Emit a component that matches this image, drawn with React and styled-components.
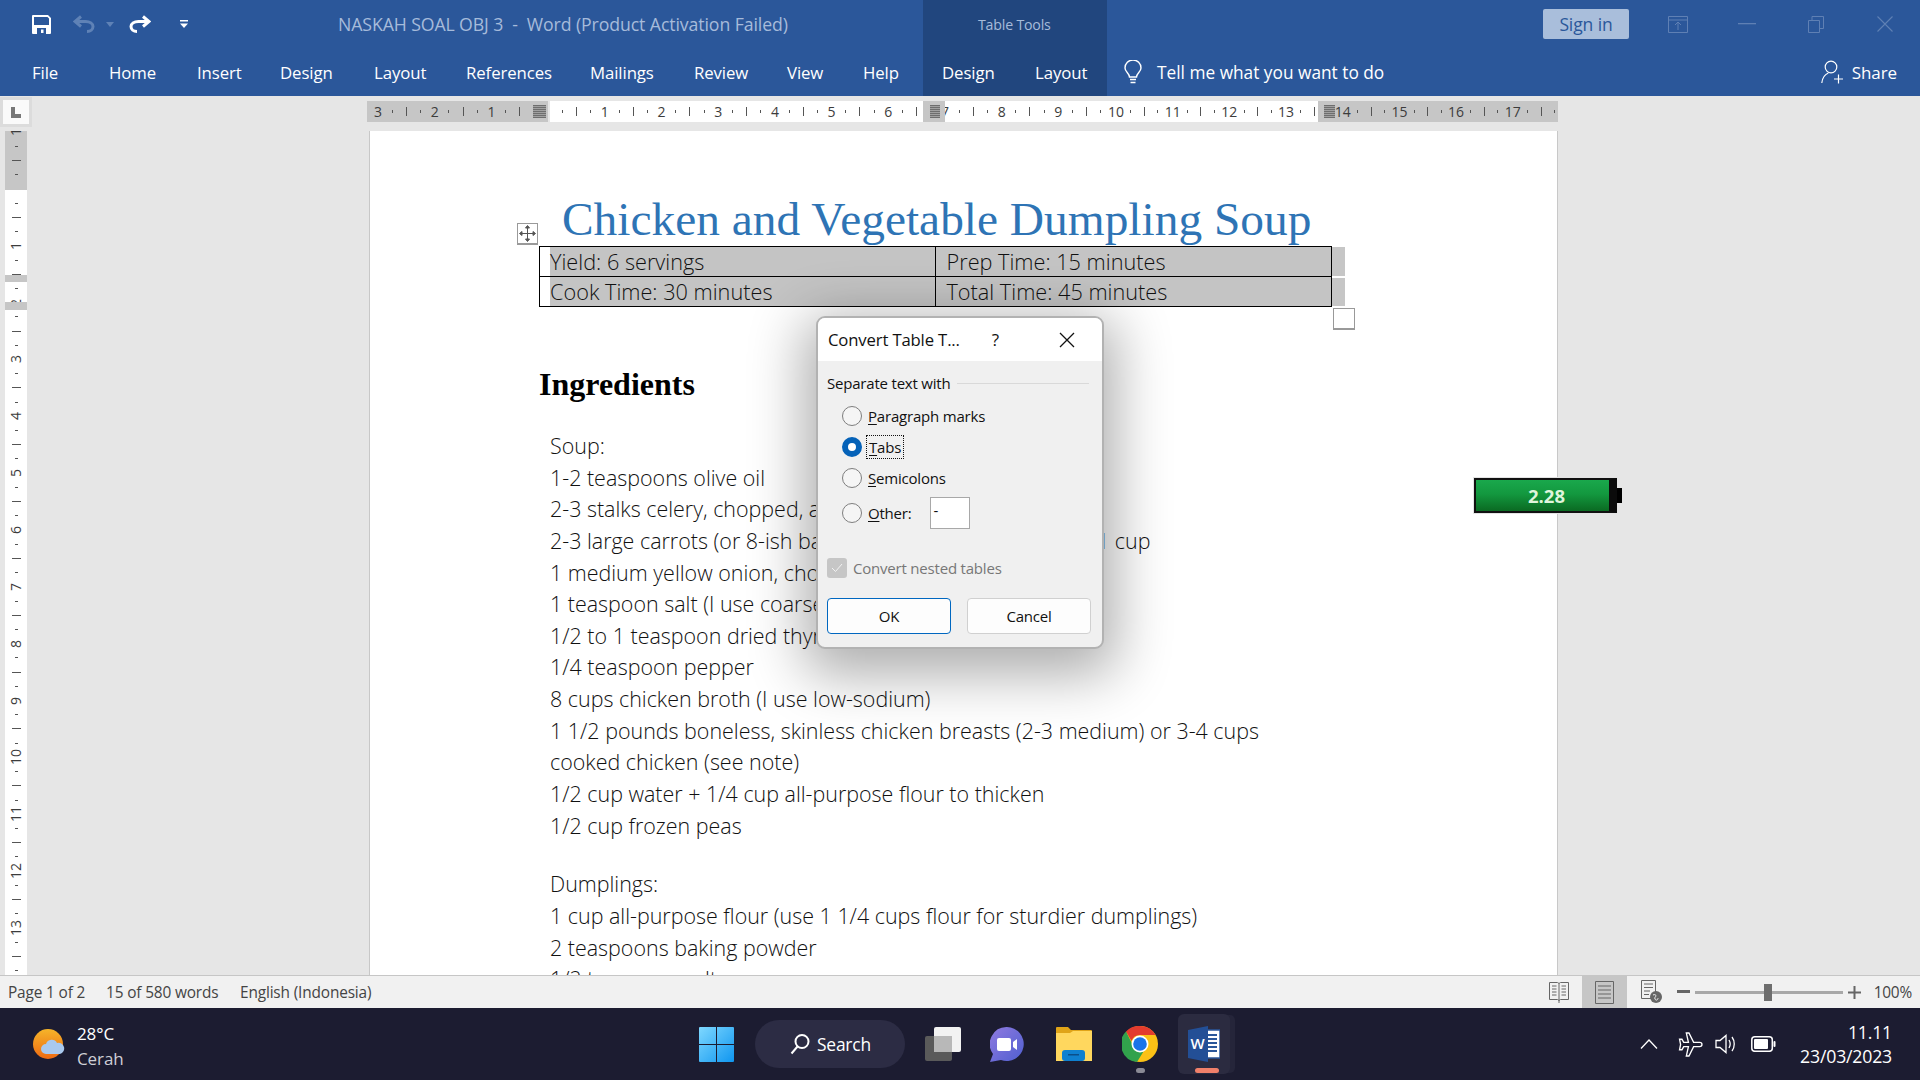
import React from "react";
import styled, { createGlobalStyle } from "styled-components";

const Global = createGlobalStyle`
  html, body { margin: 0; padding: 0; background: #e6e6e6; overflow: hidden; }
  #root { width: 1920px; height: 1080px; }
  * { box-sizing: border-box; }
`;

const UI = `"Open Sans", "Noto Sans", sans-serif`;

const Shell = styled.div`
  position: relative; width: 1920px; height: 1080px; display: flex; flex-direction: column;
  overflow: hidden; background: #e6e6e6; font-family: ${UI};
`;

/* ---------- Ribbon ---------- */
const Ribbon = styled.header`display: flex; height: 96px; background: #2b579a; flex: none;`;
const RibbonPane = styled.div`
  display: flex; flex-direction: column; flex: ${p => p.$grow ? 1 : "none"};
  width: ${p => p.$w ? p.$w + "px" : "auto"}; background: ${p => p.$dark ? "#21467e" : "transparent"};
`;
const TopRow = styled.div`display: flex; align-items: center; height: 48px;`;
const TabRow = styled.div`display: flex; align-items: center; height: 48px; padding-left: ${p => p.$pl || 0}px;`;
const QatSlot = styled.span`display: flex; margin-left: ${p => p.$ml}px; flex: none;`;
const DocTitle = styled.div`
  margin-left: ${p => p.$ml}px; font-size: 17.7px; color: #a6bbda; white-space: pre; letter-spacing: -0.1px;
`;
const ToolsLabel = styled.div`
  margin-left: 55px; font-size: 14.2px; color: #a6bbda; letter-spacing: -0.2px; white-space: nowrap;
`;
const Tab = styled.span`
  width: ${p => p.$w}px; flex: none; color: #fff; font-size: 16.8px; letter-spacing: -0.1px; white-space: nowrap;
`;
const SignIn = styled.div`
  margin-left: 436px; width: 86px; height: 30px; display: flex; align-items: center; justify-content: center;
  background: #a9bedb; color: #2b579a; font-size: 17.5px; border-radius: 2px; letter-spacing: -0.1px;
`;
const WinSlot = styled.span`
  display: flex; width: 69px; justify-content: center; flex: none; margin-left: ${p => p.$ml || 0}px;
`;
const TellMe = styled.span`
  margin-left: 15px; color: #fff; font-size: 17.3px; white-space: nowrap;
`;
const ShareWrap = styled.div`
  margin-left: auto; padding-right: 23px; display: flex; align-items: center; gap: 8px; color: #fff; font-size: 17px; letter-spacing: -0.1px;
`;
const Bulb = styled.span`display: flex; margin-left: 17px;`;

/* ---------- Rulers ---------- */
const RulerBar = styled.div`display: flex; align-items: flex-start; height: 35px; flex: none; background: #e6e6e6;`;
const CornerBox = styled.div`
  margin: 4px 0 0 3px; width: 26px; height: 24px; background: #fafafa; box-shadow: 0 0 0 3px #dcdcdc;
  display: flex; align-items: center; justify-content: center; flex: none;
`;
const RulerTrack = styled.div`
  position: relative; margin: 5px 0 0 338px; width: 1191px; height: 21px; overflow: hidden; display: flex; padding-left: 4px;
  background: linear-gradient(to right, #c6c6c6 181px, #e6e6e6 181px, #e6e6e6 183px, #fff 183px, #fff 951px, #c6c6c6 951px);
`;
const RulerCell = styled.div`
  flex: none; width: 56.7px; height: 21px; display: grid; grid-template-columns: repeat(4, 1fr); align-items: center; justify-items: center;
`;
const RulerNum = styled.span`font-size: 14px; color: #3c3c3c; line-height: 1; white-space: nowrap;`;
const TickDot = styled.i`display: block; width: 1px; height: 3px; background: #555;`;
const TickLine = styled.i`display: block; width: 1px; height: 9px; background: #555;`;
const MarginBlock = styled.div`
  position: absolute; top: 0; bottom: 0; left: 556px; width: 22px; background: #c6c6c6;
`;
const Hatch = styled.div`
  position: absolute; top: 4px; left: ${p => p.$l}px; width: ${p => p.$w}px; height: 13px;
  background: repeating-linear-gradient(0deg, #6e6e6e 0 1px, #a0a0a0 1px 2px);
`;
const Workspace = styled.div`flex: 1; min-height: 0; display: flex; overflow: hidden;`;
const VRuler = styled.div`
  position: relative; margin-left: 5px; width: 22px; flex: none; overflow: hidden;
  background: linear-gradient(to bottom, #c6c6c6 59px, #fff 59px);
`;
const VTrack = styled.div`margin-top: -6px; display: flex; flex-direction: column;`;
const VCell = styled.div`
  flex: none; height: 56.85px; display: grid; grid-template-rows: repeat(4, 1fr); align-items: center; justify-items: center;
`;
const VNum = styled.span`font-size: 14px; color: #3c3c3c; line-height: 1; transform: rotate(-90deg);`;
const VDot = styled.i`display: block; width: 3px; height: 1px; background: #555;`;
const VLine = styled.i`display: block; width: 9px; height: 1px; background: #555;`;
const VBlock = styled.div`position: absolute; left: 0; right: 0; top: ${p => p.$t}px; height: ${p => p.$h}px; background: #c6c6c6;`;

/* ---------- Document ---------- */
const Page = styled.main`
  margin-left: 342px; width: 1189px; flex: none; background: #fff; border-left: 1px solid #c8c8c8; border-right: 1px solid #c8c8c8;
  padding: 57px 0 0 169px; overflow: hidden;
`;
const DocHeading = styled.h1`
  margin: 0 0 0 23px; height: 58px; font: 400 47.4px/62px "Liberation Serif", serif; color: #2e74b5; white-space: nowrap;
`;
const TableWrap = styled.div`position: relative; width: 793px;`;
const RecipeTable = styled.div`
  display: grid; grid-template-columns: 396fr 396fr; grid-template-rows: 1fr 1fr; height: 61px; border: 1.5px solid #000;
`;
const Cell = styled.div`
  display: flex; align-items: center; font: 300 21.7px ${UI}; color: #111; white-space: nowrap;
  padding-left: ${p => p.$first ? 10 : 11}px;
  background: ${p => p.$first ? "linear-gradient(to right, #fff 10px, #c4c4c4 10px)" : "#c4c4c4"};
  border-right: ${p => p.$first ? "1.5px solid #000" : "none"};
  border-bottom: ${p => p.$top ? "1.5px solid #000" : "none"};
`;
const MoveHandle = styled.div`
  position: absolute; left: -22px; top: -23px; width: 21px; height: 22px; background: #fff; border: 1px solid #9a9a9a;
  border-bottom-width: 2px; display: flex; align-items: center; justify-content: center;
`;
const RowMark = styled.div`
  position: absolute; left: 793px; width: 13px; top: ${p => p.$t}px; height: ${p => p.$h}px; background: #c6c6c6;
`;
const ResizeHandle = styled.div`
  position: absolute; left: 794px; top: 62px; width: 22px; height: 22px; background: #fff; border: 1px solid #999; border-bottom-width: 2px;
`;
const SectionTitle = styled.h2`
  margin: 57px 0 0; font: 700 32px/40px "Liberation Serif", serif; color: #000;
`;
const Lines = styled.div`margin: 26px 0 0 11px; font: 300 21.45px/31.65px ${UI}; color: #111; white-space: nowrap;`;
const Line = styled.div`height: 31.65px;`;
const Blank = styled.div`height: 27px;`;
const Tail = styled.span`position: absolute; left: 1097px;`;

/* ---------- Status bar ---------- */
const StatusBar = styled.footer`
  height: 33px; flex: none; display: flex; align-items: stretch; background: #f1f1f1; border-top: 1px solid #c6c6c6;
  font-size: 15.4px; color: #444; letter-spacing: -0.15px;
`;
const StatusText = styled.span`align-self: center; flex: none; width: ${p => p.$w}px; margin-left: ${p => p.$ml || 0}px; white-space: nowrap;`;
const StatusRight = styled.div`margin-left: auto; display: flex; align-items: center;`;
const ViewBtn = styled.span`
  width: 45px; height: 100%; display: flex; align-items: center; justify-content: center; margin-right: ${p => p.$mr || 0}px;
  background: ${p => p.$on ? "#c6c6c6" : "transparent"};
`;
const ZoomSlider = styled.div`position: relative; width: 148px; height: 3px; background: #a8a8a8; margin: 0 5px;`;
const ZoomThumb = styled.span`position: absolute; left: 69px; top: -7px; width: 8px; height: 17px; background: #6e6e6e;`;
const ZoomPct = styled.span`margin: 0 8px 0 13px; font-size: 15.4px; letter-spacing: -0.2px;`;

/* ---------- Taskbar ---------- */
const Taskbar = styled.nav`
  height: 72px; flex: none; display: flex; align-items: center; background: #1c1c31; color: #fff; padding-left: 33px;
`;
const Weather = styled.div`width: 666px; flex: none; display: flex; align-items: center; gap: 12px;`;
const WeatherText = styled.div`font-size: 17px; line-height: 25px; letter-spacing: -0.1px; padding-top: 3px;`;
const WeatherSub = styled.div`color: #cfcfd6;`;
const Center = styled.div`display: flex; align-items: center; flex: none;`;
const TaskIcon = styled.span`
  position: relative; display: flex; flex: none; margin-left: ${p => p.$ml || 0}px;
`;
const SearchPill = styled.div`
  margin-left: 21px; width: 150px; height: 48px; border-radius: 24px; background: #2c2c44; display: flex; align-items: center; gap: 7px;
  padding-left: 35px; font-size: 17.4px; color: #fff; letter-spacing: -0.2px;
`;
const RunDot = styled.i`
  position: absolute; left: 14px; bottom: -11px; width: 9px; height: 5px; border-radius: 3px; background: #8a8a95;
`;
const WordBox = styled.div`
  position: relative; margin-left: 20px; width: 52px; height: 60px; border-radius: 6px; background: #2b2b40; display: flex;
  align-items: center; justify-content: center; box-shadow: 6px 0 0 -1px #25253a;
`;
const ActiveBar = styled.i`
  position: absolute; left: 17px; bottom: 1px; width: 24px; height: 5px; border-radius: 3px; background: #f0806a;
`;
const Tray = styled.div`
  margin-left: auto; display: flex; align-items: center; padding-right: 28px;
`;
const TrayGlyph = styled.span`display: flex; flex: none; margin-left: ${p => p.$ml || 0}px;`;
const Clock = styled.div`margin-left: 24px; text-align: right; font-size: 17.7px; line-height: 24px; letter-spacing: -0.2px;`;

/* ---------- Dialog ---------- */
const Dialog = styled.section`
  position: absolute; left: 816px; top: 316px; width: 288px; height: 333px; border-radius: 9px; border: 2px solid #b2b2b2;
  background: #f0f0f0; box-shadow: 0 14px 55px 12px rgba(0,0,0,.32); overflow: hidden; color: #111;
`;
const DialogHead = styled.div`
  height: 43px; background: #fff; display: flex; align-items: center; padding-left: 10px; font-size: 16.7px; letter-spacing: -0.15px; white-space: nowrap;
`;
const HelpMark = styled.span`margin-left: 32px; font-size: 17px; width: 14px;`;
const CloseSlot = styled.span`display: flex; margin-left: 53px;`;
const DialogBody = styled.div`padding: 12px 10px 0 9px; font-size: 15px; letter-spacing: -0.2px;`;
const Legend = styled.div`display: flex; align-items: center; gap: 6px; height: 20px; white-space: nowrap;`;
const LegendRule = styled.i`flex: 1; height: 1px; background: #d9d9d9; margin-right: 3px;`;
const RadioList = styled.div`margin: 7px 0 0 15px; display: flex; flex-direction: column;`;
const RadioRow = styled.div`display: flex; align-items: center; height: ${p => p.$h || 31}px; gap: 6px;`;
const Radio = styled.span`
  width: 20px; height: 20px; border-radius: 50%; flex: none; background: ${p => p.$on ? "#fff" : "#f5f5f5"};
  border: ${p => p.$on ? "6px solid #0562b8" : "1.5px solid #7e7e7e"};
`;
const Focus = styled.span`outline: 1px dotted #111; outline-offset: 1px; padding: 0 1px;`;
const Key = styled.span`text-decoration: underline; text-underline-offset: 2px;`;
const OtherInput = styled.div`
  margin-left: 12px; width: 40px; height: 32px; background: #fff; border: 1px solid #a8a8a8; padding: 0 0 6px 3px; display: flex; align-items: center;
`;
const CheckRow = styled.div`margin-top: 26px; display: flex; align-items: center; gap: 6px; color: #777;`;
const CheckBox = styled.span`
  width: 20px; height: 20px; border-radius: 3px; background: #c6c6c6; display: flex; align-items: center; justify-content: center;
`;
const ButtonRow = styled.div`margin-top: 20px; display: flex; gap: 16px;`;
const DlgButton = styled.div`
  width: 124px; height: 36px; border-radius: 4px; background: #fdfdfd; display: flex; align-items: center; justify-content: center;
  border: 1px solid ${p => p.$primary ? "#0067c0" : "#d0d0d0"};
`;

/* ---------- Battery gadget ---------- */
const Gadget = styled.div`position: absolute; left: 1474px; top: 478px; display: flex; align-items: center;`;
const GadgetBody = styled.div`
  width: 143px; height: 35px; border: 2px solid #111; border-right: 8px solid #0b0b0b; display: flex; align-items: center; justify-content: center;
  background: linear-gradient(to bottom, #1aa84c 0%, #13983f 45%, #0a6a22 100%); padding-left: 8px;
  color: #dff5dc; font-size: 18.5px; font-weight: 700; box-shadow: 0 0 0 1px #e4e4e4;
`;
const GadgetTip = styled.i`display: block; width: 5px; height: 15px; background: #000;`;

/* ---------- Icons ---------- */
const Save = () => (
  <svg width="19" height="19" viewBox="0 0 19 19"><path fillRule="evenodd" fill="#fff" d="M1 0h15l3 3v15a1 1 0 0 1-1 1H1a1 1 0 0 1-1-1V1a1 1 0 0 1 1-1zM2 2v8h15V3.500L15.500 2zM5 13v6h9v-6zm4 1.500h2.500V18H9z"/></svg>
);
const Arrow = ({ color, flip }) => (
  <svg width="22" height="18" viewBox="0 0 22 18" style={flip ? { transform: "scaleX(-1)" } : undefined} fill="none" stroke={color} strokeWidth="3">
    <path d="M14 1.500l6 5-6 5M20 6.500H9.500C5 6.500 2 8.500 2 11.500c0 3 2.500 5 6 5"/>
  </svg>
);
const Caret = ({ c }) => <svg width="8" height="5" viewBox="0 0 8 5"><path d="M0 0h8L4 5z" fill={c}/></svg>;
const Customize = () => <svg width="8" height="8" viewBox="0 0 8 8" fill="#fff"><rect width="8" height="1.500"/><path d="M0 3.500h8L4 8z"/></svg>;
const c = "#5f80b4";
const RibbonOpt = () => <svg width="20" height="17" viewBox="0 0 20 17" fill="none" stroke={c}><path d="M.5.500h19v16H.5zM.5 4h19M10 14V6.500M7 9l3-3 3 3"/></svg>;
const Minimize = () => <svg width="18" height="2" viewBox="0 0 18 2"><rect width="18" height="1.300" fill={c}/></svg>;
const Restore = () => <svg width="16" height="17" viewBox="0 0 16 17" fill="none" stroke={c}><path d="M.5 4.500h11v12H.5zM4 4.500V.5h11.500v12h-4"/></svg>;
const CloseWin = () => <svg width="16" height="16" viewBox="0 0 16 16" stroke={c} strokeWidth="1.100"><path d="M.5.500l15 15M15.500.500l-15 15"/></svg>;
const BulbIcon = () => (
  <svg width="18" height="24" viewBox="0 0 18 24" fill="none" stroke="#fff" strokeWidth="1.400"><path d="M5.500 17c0-3.500-4.500-5-4.500-9a8 8 0 0 1 16 0c0 4-4.500 5.500-4.500 9zM6 19.500h6M6.500 22.500h5"/></svg>
);
const ShareIcon = () => (
  <svg width="23" height="24" viewBox="0 0 23 24" fill="none" stroke="#fff" strokeWidth="1.200"><circle cx="10" cy="7" r="5.800"/><path d="M.8 23c.5-5 3-8.500 6.500-10M22 19h-9M17.500 14.500v9"/></svg>
);
const LMark = () => <svg width="10" height="11" viewBox="0 0 10 11"><path d="M0 0h4v7h6v4H0z" fill="#777"/></svg>;
const MoveIcon = () => (
  <svg width="17" height="17" viewBox="0 0 17 17" fill="none" stroke="#555"><path d="M8.500 1v15M1 8.500h15"/><path d="M6.500 3l2-2.500 2 2.500zM6.500 14l2 2.500 2-2.500zM3 6.500L.5 8.500l2.500 2zM14 6.500l2.500 2-2.500 2z" fill="#555"/></svg>
);
const g = "#666";
const ReadIcon = () => (
  <svg width="20" height="22" viewBox="0 0 20 22" fill="none" stroke={g}><path d="M.5 1.500h8l1.500 1 1.500-1h8v17h-8L10 19.500 8.500 18.500h-8zM10 2.500v20M3 5h4.500M3 8h4.500M3 11h4.500M3 14h4.500M12.500 5H17M12.500 8H17M12.500 11H17M12.500 14H17"/></svg>
);
const PrintIcon = () => (
  <svg width="19" height="23" viewBox="0 0 19 23" fill="none" stroke={g}><path d="M.5.500h18v22H.5zM3 5h13M3 9h13M3 13h13M3 17h13"/></svg>
);
const WebIcon = () => (
  <svg width="22" height="24" viewBox="0 0 22 24"><path fill="none" stroke={g} d="M.5.500h14v18H.5zM3 4h9M3 7.500h9M3 11h6M3 14.500h5"/><circle cx="15" cy="17" r="6" fill={g}/><path d="M12 15c2-1 3 0 3 1s-2 1-1 3 3 1 3-1" stroke="#f1f1f1" fill="none"/></svg>
);
const Sun = () => (
  <svg width="32" height="30" viewBox="0 0 32 30">
    <defs><linearGradient id="sun" x1="0" y1="0" x2="0" y2="1"><stop offset="0" stopColor="#f5b42a"/><stop offset="1" stopColor="#ee6a12"/></linearGradient></defs>
    <circle cx="15" cy="15" r="15" fill="url(#sun)"/>
    <path d="M13 25a5 5 0 0 1 0-10 6 6 0 0 1 11-1 5.500 5.500 0 0 1 3 11z" fill="#a9c9ee"/>
  </svg>
);
const WinLogo = () => (
  <svg width="35" height="35" viewBox="0 0 35 35">
    <defs><linearGradient id="win" x1="0" y1="0" x2="1" y2="1"><stop offset="0" stopColor="#7fd8ff"/><stop offset="1" stopColor="#0f96f0"/></linearGradient></defs>
    <path fill="url(#win)" d="M0 1a1 1 0 0 1 1-1h16v17H0zM18 0h16a1 1 0 0 1 1 1v16H18zM0 18h17v17H1a1 1 0 0 1-1-1zM18 18h17v16a1 1 0 0 1-1 1H18z"/>
  </svg>
);
const SearchIcon = () => (
  <svg width="20" height="22" viewBox="0 0 20 22" fill="none" stroke="#fff" strokeWidth="2"><circle cx="12" cy="8.500" r="6.500"/><path d="M7.500 13.500L1.500 20.500"/></svg>
);
const TaskView = () => (
  <svg width="36" height="35" viewBox="0 0 36 35">
    <rect x="0" y="9" width="27" height="25" rx="2" fill="#5a5a5a"/>
    <rect x="9" y="0" width="27" height="25" rx="2" fill="#f2f2f2"/>
    <rect x="9" y="9" width="18" height="16" fill="#b8b8b8"/>
  </svg>
);
const Teams = () => (
  <svg width="34" height="35" viewBox="0 0 34 35">
    <defs><linearGradient id="tm" x1="0" y1="0" x2="1" y2="1"><stop offset="0" stopColor="#8f7ae0"/><stop offset="1" stopColor="#4f5fd0"/></linearGradient></defs>
    <path fill="url(#tm)" d="M17 0a17 17 0 1 1-6 33L0 35l3-8A17 17 0 0 1 17 0z"/>
    <rect x="7" y="11" width="14" height="13" rx="2" fill="#fff"/><path d="M23 15l4-3v11l-4-3z" fill="#fff"/>
  </svg>
);
const Folder = () => (
  <svg width="36" height="34" viewBox="0 0 36 34">
    <path fill="#e0a418" d="M0 1a1 1 0 0 1 1-1h11l3 3h20a1 1 0 0 1 1 1v6H0z"/>
    <path fill="#ffd75e" d="M0 6h14l3-2h19v30H0z"/>
    <rect x="6" y="23" width="23" height="11" rx="3" fill="#0f80d0"/><rect x="12" y="27" width="11" height="1.500" fill="#0b4f8a"/>
  </svg>
);
const Chrome = () => (
  <svg width="36" height="36" viewBox="0 0 36 36">
    <circle cx="18" cy="18" r="18" fill="#fbc116"/>
    <path fill="#e33b2e" d="M18 0a18 18 0 0 1 15.600 9H18a9 9 0 0 0-8.500 6L4 5.500A18 18 0 0 1 18 0z"/>
    <path fill="#31a24c" d="M4 5.500l7 14a8 8 0 0 0 10.500 6L15 36A18 18 0 0 1 4 5.500z"/>
    <circle cx="18" cy="18" r="8.500" fill="#fff"/><circle cx="18" cy="18" r="6.800" fill="#1b73e8"/>
  </svg>
);
const WordIcon = () => (
  <svg width="32" height="36" viewBox="0 0 32 36">
    <rect x="12" y="4" width="20" height="28" fill="#fff" stroke="#2b579a" strokeWidth="1.500"/>
    <path d="M16 9h13M16 13h13M16 17h13M16 21h13M16 25h13" stroke="#2b579a" strokeWidth="1.800"/>
    <path d="M0 4l20-4v36L0 32z" fill="#234f96"/>
    <text x="9.500" y="23" textAnchor="middle" fill="#fff" fontFamily="Open Sans, sans-serif" fontWeight="600" fontSize="15">W</text>
  </svg>
);
const Chevron = () => <svg width="18" height="10" viewBox="0 0 18 10" fill="none" stroke="#fff" strokeWidth="1.300"><path d="M1 9.500l8-8.500 8 8.500"/></svg>;
const Plane = () => (
  <svg width="25" height="29" viewBox="0 0 24 24" fill="none" stroke="#fff" strokeWidth="1.300"><path d="M23 12c0-1.200-1-2-2.200-2H15L10.500 1H8l2 9H5.500L3.800 7H1.500l1 5-1 5h2.300l1.700-3H10l-2 9h2.500L15 14h5.800c1.200 0 2.200-.8 2.200-2z"/></svg>
);
const Speaker = () => (
  <svg width="24" height="24" viewBox="0 0 24 24" fill="none" stroke="#fff" strokeWidth="1.300"><path d="M2 8.500h4L12 3.500v17l-6-5H2zM15 8c1.500 2.500 1.500 5.500 0 8M18 5c3 4 3 10 0 14" /></svg>
);
const BatteryTray = () => (
  <svg width="25" height="16" viewBox="0 0 25 16"><rect x=".8" y=".8" width="20.500" height="14.500" rx="3" fill="none" stroke="#fff" strokeWidth="1.500"/><rect x="3" y="3" width="14" height="10" rx="1" fill="#fff"/><rect x="22.500" y="5" width="2" height="6" rx="1" fill="#fff"/></svg>
);
const CloseX = () => <svg width="16" height="16" viewBox="0 0 16 16" stroke="#111" strokeWidth="1.300"><path d="M1 1l14 14M15 1L1 15"/></svg>;
const Tick = () => <svg width="12" height="10" viewBox="0 0 12 10" fill="none" stroke="#f2f2f2" strokeWidth="1"><path d="M1 5l3.500 3.500L11 1"/></svg>;

/* ---------- Data ---------- */
const tabs = [["File", 77], ["Home", 88], ["Insert", 83], ["Design", 94], ["Layout", 92], ["References", 124], ["Mailings", 104], ["Review", 93], ["View", 76], ["Help", 79]];
const hNums = ["3", "2", "1", "", "1", "2", "3", "4", "5", "6", "7", "8", "9", "10", "11", "12", "13", "14", "15", "16", "17"];
const vNums = ["1", "", "1", "2", "3", "4", "5", "6", "7", "8", "9", "10", "11", "12", "13"];

const App = () => (
  <Shell>
    <Global />
    <Ribbon>
      <RibbonPane $w={923}>
        <TopRow>
          <QatSlot $ml={32}><Save /></QatSlot>
          <QatSlot $ml={22}><Arrow color="#5f82b6" flip /></QatSlot>
          <QatSlot $ml={11}><Caret c="#5f82b6" /></QatSlot>
          <QatSlot $ml={15}><Arrow color="#fff" /></QatSlot>
          <QatSlot $ml={29}><Customize /></QatSlot>
          <DocTitle $ml={150}>NASKAH SOAL OBJ 3  -  Word (Product Activation Failed)</DocTitle>
        </TopRow>
        <TabRow $pl={32}>
          {tabs.map(([t, w]) => <Tab key={t} $w={w}>{t}</Tab>)}
        </TabRow>
      </RibbonPane>
      <RibbonPane $w={184} $dark>
        <TopRow><ToolsLabel>Table Tools</ToolsLabel></TopRow>
        <TabRow $pl={19}>
          <Tab $w={93}>Design</Tab>
          <Tab $w={70}>Layout</Tab>
        </TabRow>
      </RibbonPane>
      <RibbonPane $grow>
        <TopRow>
          <SignIn>Sign in</SignIn>
          <WinSlot $ml={14}><RibbonOpt /></WinSlot>
          <WinSlot><Minimize /></WinSlot>
          <WinSlot><Restore /></WinSlot>
          <WinSlot><CloseWin /></WinSlot>
        </TopRow>
        <TabRow>
          <Bulb><BulbIcon /></Bulb>
          <TellMe>Tell me what you want to do</TellMe>
          <ShareWrap><ShareIcon />Share</ShareWrap>
        </TabRow>
      </RibbonPane>
    </Ribbon>

    <RulerBar>
      <CornerBox><LMark /></CornerBox>
      <RulerTrack>
        {hNums.map((n, i) => (
          <RulerCell key={i}>
            <RulerNum>{n}</RulerNum><TickDot /><TickLine /><TickDot />
          </RulerCell>
        ))}
        <MarginBlock />
        <Hatch $l={166} $w={13} />
        <Hatch $l={563} $w={10} />
        <Hatch $l={957} $w={11} />
      </RulerTrack>
    </RulerBar>

    <Workspace>
      <VRuler>
        <VTrack>
          {vNums.map((n, i) => (
            <VCell key={i}>
              <VNum>{n}</VNum><VDot /><VLine /><VDot />
            </VCell>
          ))}
        </VTrack>
        <VBlock $t={144} $h={7} />
        <VBlock $t={171} $h={8} />
      </VRuler>
      <Page>
        <DocHeading>Chicken and Vegetable Dumpling Soup</DocHeading>
        <TableWrap>
          <RecipeTable>
            <Cell $first $top>Yield: 6 servings</Cell>
            <Cell $top>Prep Time: 15 minutes</Cell>
            <Cell $first>Cook Time: 30 minutes</Cell>
            <Cell>Total Time: 45 minutes</Cell>
          </RecipeTable>
          <MoveHandle><MoveIcon /></MoveHandle>
          <RowMark $t={1} $h={29} />
          <RowMark $t={32} $h={28} />
          <ResizeHandle />
        </TableWrap>
        <SectionTitle>Ingredients</SectionTitle>
        <Lines>
          <Line>Soup:</Line>
          <Line>1-2 teaspoons olive oil</Line>
          <Line>2-3 stalks celery, chopped, about 1 cup</Line>
          <Line>2-3 large carrots (or 8-ish baby carrots)<Tail>1 cup</Tail></Line>
          <Line>1 medium yellow onion, chopped, about 1 cup</Line>
          <Line>1 teaspoon salt (I use coarse kosher salt)</Line>
          <Line>1/2 to 1 teaspoon dried thyme</Line>
          <Line>1/4 teaspoon pepper</Line>
          <Line>8 cups chicken broth (I use low-sodium)</Line>
          <Line>1 1/2 pounds boneless, skinless chicken breasts (2-3 medium) or 3-4 cups</Line>
          <Line>cooked chicken (see note)</Line>
          <Line>1/2 cup water + 1/4 cup all-purpose flour to thicken</Line>
          <Line>1/2 cup frozen peas</Line>
          <Blank />
          <Line>Dumplings:</Line>
          <Line>1 cup all-purpose flour (use 1 1/4 cups flour for sturdier dumplings)</Line>
          <Line>2 teaspoons baking powder</Line>
          <Line>1/2 teaspoon salt</Line>
        </Lines>
      </Page>
    </Workspace>

    <StatusBar>
      <StatusText $ml={8} $w={98}>Page 1 of 2</StatusText>
      <StatusText $w={134}>15 of 580 words</StatusText>
      <StatusText $w={200}>English (Indonesia)</StatusText>
      <StatusRight>
        <ViewBtn><ReadIcon /></ViewBtn>
        <ViewBtn $on $mr={3}><PrintIcon /></ViewBtn>
        <ViewBtn $mr={2}><WebIcon /></ViewBtn>
        <svg width="13" height="4" viewBox="0 0 13 4"><rect width="13" height="3" fill="#666"/></svg>
        <ZoomSlider><ZoomThumb /></ZoomSlider>
        <svg width="13" height="13" viewBox="0 0 13 13"><path d="M0 5.500h13v2H0zM5.500 0h2v13h-2z" fill="#666"/></svg>
        <ZoomPct>100%</ZoomPct>
      </StatusRight>
    </StatusBar>

    <Taskbar>
      <Weather>
        <Sun />
        <WeatherText>
          <div>28°C</div>
          <WeatherSub>Cerah</WeatherSub>
        </WeatherText>
      </Weather>
      <Center>
        <TaskIcon><WinLogo /></TaskIcon>
        <SearchPill><SearchIcon />Search</SearchPill>
        <TaskIcon $ml={20}><TaskView /></TaskIcon>
        <TaskIcon $ml={29}><Teams /></TaskIcon>
        <TaskIcon $ml={32}><Folder /></TaskIcon>
        <TaskIcon $ml={30}><Chrome /><RunDot /></TaskIcon>
        <WordBox><WordIcon /><ActiveBar /></WordBox>
      </Center>
      <Tray>
        <TrayGlyph><Chevron /></TrayGlyph>
        <TrayGlyph $ml={20}><Plane /></TrayGlyph>
        <TrayGlyph $ml={11}><Speaker /></TrayGlyph>
        <TrayGlyph $ml={13}><BatteryTray /></TrayGlyph>
        <Clock>
          <div>11.11</div>
          <div>23/03/2023</div>
        </Clock>
      </Tray>
    </Taskbar>

    <Dialog>
      <DialogHead>
        Convert Table T...
        <HelpMark>?</HelpMark>
        <CloseSlot><CloseX /></CloseSlot>
      </DialogHead>
      <DialogBody>
        <Legend>Separate text with<LegendRule /></Legend>
        <RadioList>
          <RadioRow><Radio /><span><Key>P</Key>aragraph marks</span></RadioRow>
          <RadioRow><Radio $on /><Focus><Key>T</Key>abs</Focus></RadioRow>
          <RadioRow><Radio /><span><Key>S</Key>emicolons</span></RadioRow>
          <RadioRow $h={39}><Radio /><span><Key>O</Key>ther:</span><OtherInput>-</OtherInput></RadioRow>
        </RadioList>
        <CheckRow><CheckBox><Tick /></CheckBox>Convert nested tables</CheckRow>
        <ButtonRow>
          <DlgButton $primary>OK</DlgButton>
          <DlgButton>Cancel</DlgButton>
        </ButtonRow>
      </DialogBody>
    </Dialog>

    <Gadget>
      <GadgetBody>2.28</GadgetBody>
      <GadgetTip />
    </Gadget>
  </Shell>
);

export default App;
